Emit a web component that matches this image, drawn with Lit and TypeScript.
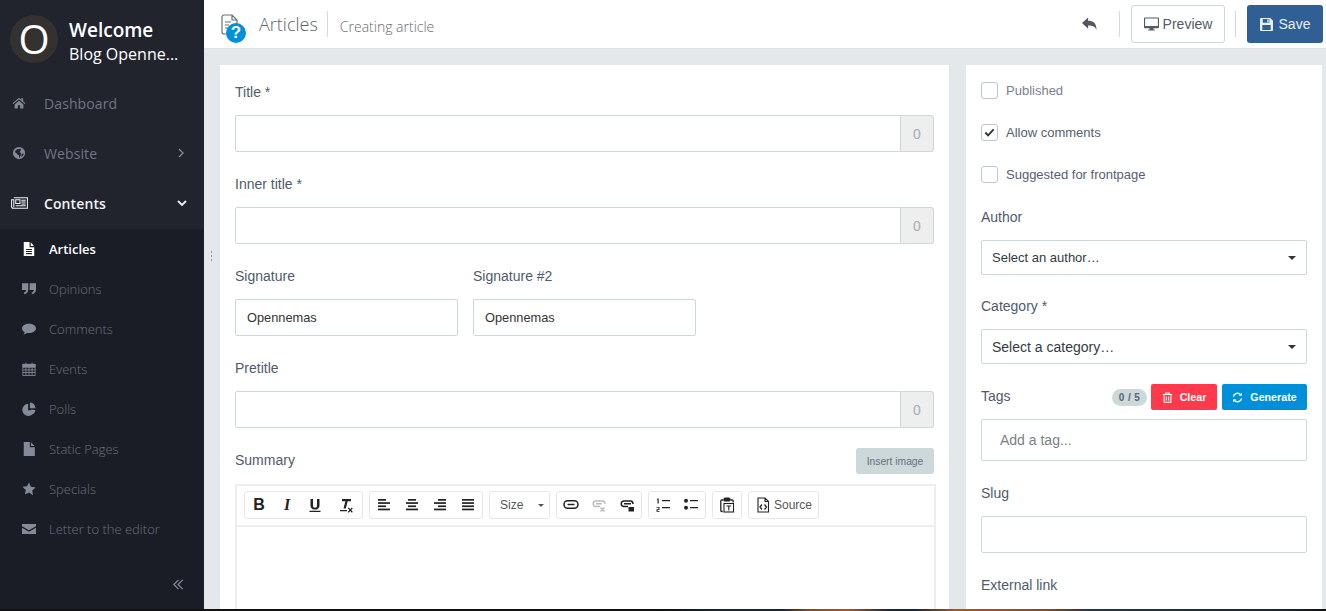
import { LitElement, html, css, svg } from "lit";
import { customElement } from "lit/decorators.js";

const ic = (vb: string, d: string, cls = "") => html`<svg class=${cls} viewBox=${vb} fill="currentColor"><path d=${d}></path></svg>`;

const I = {
  home: ic("0 0 24 24", "M12 3 1 12.500l1.200 1.400L12 5.500l9.800 8.400 1.200-1.400-4-3.400V4h-3v2.500L12 3ZM4.500 14.500V21.500h5.500V16h4v5.500h5.500v-7L12 8l-7.500 6.500Z"),
  globe: ic("0 0 24 24", "M12 1.500a10.500 10.500 0 1 0 0 21 10.500 10.500 0 0 0 0-21Zm-3 3 2 1 3-1 2 2-2 2-1 2 2 1 1 3-2 3-1 3-1-1v-4l-3-1-1-2-3-2 1-3 2-1 2-2Zm8 9 2-1 1 2-2 3-2 1 1-5Z"),
  news: html`<svg viewBox="0 0 18 14" fill="none" stroke="currentColor" stroke-width="1.100"><path d="M3 1.500h14.400v11H2a1.400 1.400 0 0 1-1.400-1.400V3.500h2.400v8"></path><path d="M5 3.600h4.500v4H5zM11 4h4.600M11 6h4.600M11 8h4.600M5 10h10.600"></path></svg>`,
  file: ic("0 0 24 24", "M3 0h10.500v9H22v15H3V0Zm12.500.5L21.500 7h-6V.5Z"),
  fileText: ic("0 0 24 24", "M3 0h10v9h8v15H3V0Zm12 .5L20.500 7H15V.5ZM7 12v1.800h10V12H7Zm0 3.500v1.800h10v-1.800H7Zm0 3.500v1.800h10V19H7Z"),
  quote: ic("0 0 24 24", "M0 2h10.800v10.500c0 5-2.800 8.500-7.300 8.500v-3.500c2.200 0 3.300-1.500 3.300-4H0V2Zm13.200 0H24v10.500c0 5-2.800 8.500-7.300 8.500v-3.500c2.200 0 3.300-1.500 3.300-4h-6.800V2Z"),
  comment: ic("0 0 24 24", "M12 3C5.400 3 0 6.600 0 11c0 2.600 1.800 4.900 4.600 6.400-.300 1.500-1.100 2.800-2.400 3.900 2.400-.200 4.700-1.200 6.300-2.600 1.100.2 2.300.3 3.500.3 6.600 0 12-3.600 12-8s-5.400-8-12-8Z"),
  calendar: html`<svg viewBox="0 0 24 24" fill="none" stroke="currentColor" stroke-width="1.400"><rect x="1.500" y="4" width="21" height="19" fill="none"></rect><path d="M1.500 4h21v5h-21z" fill="currentColor"></path><path d="M1.500 13.500h21M1.500 18h21M6.700 9v14M12 9v14M17.300 9v14M6.700 1v4M17.300 1v4" stroke-width="1.500"></path></svg>`,
  pie: ic("0 0 24 24", "M10.500 3v11h11A10.500 10.500 0 1 1 10.500 3Zm3-2A10.500 10.500 0 0 1 23 10.500l-9.500.200V1Zm1.500 12 8 .5a10 10 0 0 1-3 6.500L15 13Z"),
  star: ic("0 0 24 24", "m12 1 3.400 7.300 7.900 1-5.800 5.400 1.500 7.800L12 18l-7 3.500 1.500-7.800L.7 8.300l7.900-1L12 1Z"),
  mail: ic("0 0 24 24", "M0 3.500h24v3.700L12 14 0 7.200V3.500Zm0 6.500 12 6.800L24 10v10.500H0V10Z"),
};

const navTop = [
  { icon: I.home, label: "Dashboard" },
  { icon: I.globe, label: "Website", chev: "r" },
];
const navSub = [
  { icon: I.fileText, label: "Articles", active: true },
  { icon: I.quote, label: "Opinions" },
  { icon: I.comment, label: "Comments" },
  { icon: I.calendar, label: "Events" },
  { icon: I.pie, label: "Polls" },
  { icon: I.file, label: "Static Pages" },
  { icon: I.star, label: "Specials" },
  { icon: I.mail, label: "Letter to the editor" },
];

@customElement("app-root")
export class AppRoot extends LitElement {
  static styles = css`
    :host { display: block; width: 1326px; height: 611px; overflow: hidden; font-family: "Liberation Sans", Arial, sans-serif; font-size: 14px; color: #4f5b6b; background: #e4e8ea; }
    * { box-sizing: border-box; }
    svg { display: block; }
    .app { display: flex; height: 609px; overflow: hidden; }
    .strip { height: 2px; background: linear-gradient(90deg, #111 0 50%, #1c2530 54%, #1c2530 59%, #8a4a1a 61%, #a8581c 64%, #1c2530 67%, #1c2530 69%, #a8581c 72%, #8a4a1a 79%, #2b3542 82%, #1c2530 97%, #111 100%); }

    .side { width: 204px; flex: none; display: flex; flex-direction: column; background: #1a1d25; font-family: "Open Sans", sans-serif; }
    .sideTop { background: #21242d; height: 229px; flex: none; }
    .brand { display: flex; align-items: center; height: 78px; padding: 0 0 0 10px; gap: 11px; color: #fff; }
    .logo { width: 48px; height: 48px; border-radius: 50%; background: #333230; display: flex; align-items: center; justify-content: center; font-size: 40px; line-height: 1; color: #fff; }
    .who { line-height: 24px; margin-top: 6px; }
    .who b { display: block; font-weight: 600; font-size: 19px; }
    .who span { display: block; font-size: 16px; }
    .item { display: flex; align-items: center; height: 50px; color: #707584; font-size: 14px; letter-spacing: .1px; }
    .item .ico { width: 44px; padding-left: 12px; flex: none; color: #858a98; }
    .item .ico svg { width: 14px; height: 14px; }
    .item.open { color: #f2f2f4; font-weight: 600; }
    .item.open .ico { color: #f2f2f4; padding-left: 11px; }
    .item.open .ico svg { width: 17px; height: 14px; }
    .chev { margin-left: auto; margin-right: 18px; color: #858a98; }
    .chev svg { width: 10px; height: 10px; }
    .open .chev { color: #f2f2f4; margin-right: 17px; }
    .sub { display: flex; flex-direction: column; flex: 1; }
    .subitem { display: flex; align-items: center; height: 40px; color: #6b707d; font-size: 13px; font-weight: 300; }
    .subitem .ico { width: 49px; padding-left: 22px; flex: none; color: #858a98; }
    .subitem .ico svg { width: 14px; height: 14px; }
    .subitem.active { color: #fff; font-weight: 600; }
    .subitem.active .ico { color: #fff; }
    .collapse { margin-top: auto; height: 50px; display: flex; justify-content: flex-end; align-items: center; padding: 0 20px 0 0; color: #858a98; }
    .collapse svg { width: 11px; height: 11px; }

    .main { flex: 1; min-width: 0; display: flex; flex-direction: column; position: relative; }
    .top { height: 49px; flex: none; background: #fff; border-bottom: 1px solid #e0e4e6; display: flex; align-items: center; padding: 0 3px 0 16px; }
    .helpIcon { position: relative; width: 26px; height: 29px; color: #6a6f76; margin-top: 9px; }
    .helpIcon > svg { width: 18px; height: 23px; position: absolute; left: 1px; top: 0; }
    .q { position: absolute; right: 0; bottom: 0; width: 20px; height: 20px; border-radius: 50%; background: #0090da; color: #fff; font-weight: 700; font-size: 17px; line-height: 20px; text-align: center; }
    .crumb { font-family: "Open Sans", sans-serif; font-weight: 300; font-size: 18px; color: #5f646b; margin-left: 13px; }
    .vr { width: 1px; height: 26px; background: #d5d9db; flex: none; }
    .crumbVr { margin: 0 12px 0 9px; }
    .crumb2 { font-family: "Open Sans", sans-serif; font-weight: 300; font-size: 14px; color: #666b72; margin-top: 4px; }
    .actions { margin-left: auto; display: flex; align-items: center; }
    .back { color: #55595f; margin-right: 22px; }
    .back svg { width: 15px; height: 14px; }
    .btnPrev { height: 38px; width: 94px; margin: 0 10px 0 11px; border: 1px solid #ccd8da; border-radius: 3px; background: #fff; display: flex; align-items: center; justify-content: center; gap: 4px; color: #555b62; font-size: 14px; }
    .btnPrev svg { width: 15px; height: 14px; }
    .btnSave { height: 38px; width: 76px; margin-left: 11px; border-radius: 3px; background: #305f96; display: flex; align-items: center; justify-content: center; gap: 6px; color: #e8eef5; font-size: 14px; }
    .btnSave svg { width: 13px; height: 13px; }

    .grippy { position: absolute; left: 7px; top: 251px; display: flex; flex-direction: column; gap: 2px; }
    .grippy i { width: 1px; height: 2px; background: #8d9499; display: block; }
    .body { flex: 1; min-height: 0; display: flex; padding: 16px 4px 0 16px; gap: 17px; overflow: hidden; align-items: flex-start; }
    .card { background: #fff; height: 800px; }
    .left { width: 729px; flex: none; padding: 0 15px; }
    .right { flex: 1; padding: 0 15px; }

    .group { padding-top: 19px; height: 92px; }
    .lbl { line-height: 16px; height: 16px; color: #4f5b6b; font-size: 14px; }
    .ctl { margin-top: 15px; }
    .igroup { display: flex; height: 37px; }
    .input { flex: 1; height: 37px; border: 1px solid #ccd8da; border-radius: 2px 0 0 2px; background: #fff; color: #333; padding: 0 11px; display: flex; align-items: center; font-size: 12.800px; }
    .addon { width: 33px; height: 37px; background: #eeeeee; border: 1px solid #ccd8da; border-left: 0; border-radius: 0 3px 3px 0; color: #a3acb5; display: flex; align-items: center; justify-content: center; font-size: 14px; }
    .cols { display: flex; gap: 15px; }
    .cols > div { width: 223px; }
    .cols .input { flex: none; width: 223px; border-radius: 2px; }

    .sumHead { display: flex; justify-content: space-between; padding-top: 19px; height: 51px; }
    .insert { width: 78px; height: 26px; margin-top: -4px; background: #ccd8da; border-radius: 3px; color: #66707a; font-size: 10.300px; display: flex; align-items: center; justify-content: center; }
    .editor { width: 701px; height: 300px; border: 2px solid #eeeeee; border-bottom: 0; }
    .tb { height: 41px; border-bottom: 2px solid #eeeeee; display: flex; gap: 6px; padding: 5px 0 0 7px; }
    .tg { display: flex; height: 28px; border: 1px solid #e8e8e8; border-radius: 3px; align-items: center; color: #222; }
    .tb button { all: unset; width: 28px; height: 26px; display: flex; align-items: center; justify-content: center; color: #222; }
    .tb button svg { width: 16px; height: 16px; }
    .tb button.wide { width: 33px; }
    .tb .dis { color: #b9b9b9; }
    .size { width: 61px; padding-left: 10px; font-size: 12px; color: #555; display: flex; align-items: center; }
    .size i { margin-left: auto; margin-right: 5px; border: 3px solid transparent; border-top: 3px solid #555; border-bottom: 0; width: 0; height: 0; }
    .src { width: 71px; padding-left: 6px; gap: 3px; font-size: 12px; color: #555; }
    .src svg { width: 16px; height: 16px; color: #222; }
    .tb .bold { font: 700 16px "Liberation Sans", sans-serif; line-height: 1; }
    .tb .ital { font: italic 700 16px "Liberation Serif", serif; line-height: 1; }

    .check { display: flex; align-items: center; gap: 8px; height: 42px; font-size: 13px; color: #55606e; }
    .checks { padding-top: 4px; }
    .box { width: 17px; height: 17px; border: 1px solid #bcc6cc; border-radius: 3px; background: #fff; flex: none; display: flex; align-items: center; justify-content: center; color: #333; }
    .box svg { width: 11px; height: 11px; }
    .muted { color: #78818c; }
    .sel { height: 35px; border: 1px solid #ccd8da; border-radius: 2px; display: flex; align-items: center; padding: 0 10px; color: #333b42; font-size: 13px; margin-top: 15px; }
    .sel.big { font-size: 14px; }
    .sel i { margin-left: auto; border: 4px solid transparent; border-top: 4px solid #333; border-bottom: 0; width: 0; height: 0; }
    .fl { padding-top: 14px; }
    .catg { padding-top: 23px; }
    .tagsHead { display: flex; align-items: center; padding-top: 16px; height: 50px; }
    .tagsHead .lbl { margin-right: auto; margin-top: -2px; }
    .badge { width: 35px; height: 17px; border-radius: 9px; background: #ccd8da; font-weight: 700; font-size: 10px; color: #5a6670; display: flex; align-items: center; justify-content: center; margin-right: 4px; letter-spacing: .4px; }
    .small { height: 26px; border-radius: 2px; color: #fff; font-weight: 700; font-size: 10.700px; display: flex; align-items: center; justify-content: center; gap: 7px; }
    .small svg { width: 11px; height: 11px; }
    .red { width: 66px; background: #ff3a4c; margin-right: 5px; }
    .blue { width: 85px; background: #0090da; }
    .tagbox { height: 42px; border: 1px solid #ccd8da; border-radius: 2px; display: flex; align-items: center; padding: 0 18px; color: #7a7f85; font-size: 14px; margin-top: 5px; }
    .slug { padding-top: 24px; }
    .slug .input { border-radius: 2px; height: 37px; margin-top: 15px; }
    .ext { padding-top: 24px; }
  `;

  private lines(ws: [number, number][]) {
    return html`<svg viewBox="0 0 16 16" fill="currentColor">${ws.map(([x, w], i) => svg`<rect x=${x} y=${2 + i * 3.2} width=${w} height="1.700"></rect>`)}</svg>`;
  }

  private top() {
    return html`
      <div class="top">
        <div class="helpIcon">
          <svg viewBox="0 0 18 23" fill="none" stroke="currentColor" stroke-width="1.200"><path d="M3 1h8l5 5v6M11 1v5h5M3 1a2 2 0 0 0-2 2v15a2 2 0 0 0 2 2h3M4 8h6M4 11h4M4 14h3"></path></svg>
          <div class="q">?</div>
        </div>
        <div class="crumb">Articles</div>
        <div class="vr crumbVr"></div>
        <div class="crumb2">Creating article</div>
        <div class="actions">
          <div class="back"><svg viewBox="0 0 16 14" fill="currentColor"><path d="M6.500 0v3.600C11.500 3.700 15.500 5.500 15.500 13.500c-1.300-4-4-5-9-5V12L0 6l6.500-6Z"></path></svg></div>
          <div class="vr"></div>
          <div class="btnPrev"><svg viewBox="0 0 16 14" fill="currentColor"><path fill-rule="evenodd" d="M1 0h14a1 1 0 0 1 1 1v9.500a1 1 0 0 1-1 1H10v1.300h1.500V14h-7v-1.200H6v-1.300H1a1 1 0 0 1-1-1V1a1 1 0 0 1 1-1Zm.2 1.200v8h13.600v-8H1.200Z"></path></svg>Preview</div>
          <div class="vr"></div>
          <div class="btnSave"><svg viewBox="0 0 14 14" fill="currentColor"><path fill-rule="evenodd" d="M1 0h10l3 3v10a1 1 0 0 1-1 1H1a1 1 0 0 1-1-1V1a1 1 0 0 1 1-1Zm2 1.200V5h7V1.200H3Zm-.5 6.300v5.300h9V7.500h-9Zm5.300-6h1.500v3H7.800v-3Z"></path></svg>Save</div>
        </div>
      </div>`;
  }

  private toolbar() {
    return html`
      <div class="tb">
        <div class="tg">
          <button class="bold">B</button>
          <button class="ital">I</button>
          <button><svg viewBox="0 0 16 16" fill="currentColor"><path d="M3.500 2H6v6.500c0 1.500.8 2.200 2 2.200s2-.7 2-2.200V2h2.500v6.600c0 2.800-1.800 4-4.500 4s-4.500-1.200-4.500-4V2ZM2.500 13.800h11V15h-11z"></path></svg></button>
          <button class="wide"><svg viewBox="0 0 16 16" fill="currentColor"><path d="M4 2h9v2.200h-3.300L7.800 11.500H5.500l1.900-7.300H4ZM2 13h7v1.300H2zM10.800 10.500l1.500 1.700 1.500-1.700 1 .8-1.600 1.800 1.600 1.800-1 .8-1.500-1.700-1.500 1.700-1-.8 1.600-1.800-1.600-1.800z"></path></svg></button>
        </div>
        <div class="tg">
          <button>${this.lines([[2, 8], [2, 12], [2, 8], [2, 12]])}</button>
          <button>${this.lines([[4, 8], [2, 12], [4, 8], [2, 12]])}</button>
          <button>${this.lines([[6, 8], [2, 12], [6, 8], [2, 12]])}</button>
          <button>${this.lines([[2, 12], [2, 12], [2, 12], [2, 12]])}</button>
        </div>
        <div class="tg size">Size<i></i></div>
        <div class="tg">
          <button><svg viewBox="0 0 16 16" fill="none" stroke="currentColor" stroke-width="1.500"><rect x="1" y="3.800" width="14" height="7.400" rx="3.600"></rect><path d="M4.500 7.500h7"></path></svg></button>
          <button class="dis"><svg viewBox="0 0 16 16" fill="none" stroke="currentColor" stroke-width="1.400"><path d="M9 9.500H4.500a2.800 2.800 0 0 1 0-5.500h7a2.800 2.800 0 0 1 2.500 3M5 6.800h6M9.500 10.500l4 4m0-4-4 4"></path></svg></button>
          <button><svg viewBox="0 0 16 16" fill="none" stroke="currentColor" stroke-width="1.500"><path d="M9 9.500H4.500a2.800 2.800 0 0 1 0-5.500h7a2.800 2.800 0 0 1 2.500 3M5 6.800h7"></path><rect x="9.500" y="10" width="5.500" height="4.500" fill="currentColor" stroke="none"></rect></svg></button>
        </div>
        <div class="tg">
          <button><svg viewBox="0 0 16 16" fill="currentColor"><path d="M7 3h8v1.300H7zM7 10h8v1.300H7z"></path><path d="M2.500 1.500h1.200v5H2.500v-4H1.500zM1.500 10h3v3H2.600v1H4.600v.8h-3.100v-2.600h2v-1.400h-2z"></path></svg></button>
          <button><svg viewBox="0 0 16 16" fill="currentColor"><path d="M7 3h8v1.300H7zM7 10h8v1.300H7z"></path><circle cx="3" cy="3.700" r="2"></circle><circle cx="3" cy="10.700" r="2"></circle></svg></button>
        </div>
        <div class="tg">
          <button><svg viewBox="0 0 16 16" fill="none" stroke="currentColor" stroke-width="1.100"><path d="M4.500 3H2.800a1 1 0 0 0-1 1v9.500a1 1 0 0 0 1 1h1M11.500 3h1.700a1 1 0 0 1 1 1v1.500" stroke-width="1.300"></path><rect x="5" y="1" width="6" height="3" rx="1" fill="currentColor"></rect><rect x="5" y="6.500" width="9.500" height="8.500"></rect><path d="M7.500 9h4.500M9.800 9v4.500"></path></svg></button>
        </div>
        <div class="tg src">
          <svg viewBox="0 0 16 16" fill="none" stroke="currentColor" stroke-width="1.100"><path d="M3 1h7l3.500 3.500V15H3zM10 1v3.500h3.500"></path><path d="m7 7.500-2 2.500 2 2.500M9.500 7.500l2 2.500-2 2.500" stroke-width="1.300"></path></svg>
          Source
        </div>
      </div>`;
  }

  render() {
    return html`
      <div class="app">
        <aside class="side">
          <div class="sideTop">
            <div class="brand">
              <div class="logo">O</div>
              <div class="who"><b>Welcome</b><span>Blog Openne...</span></div>
            </div>
            ${navTop.map((n) => html`
              <div class="item">
                <div class="ico">${n.icon}</div>${n.label}
                ${n.chev ? html`<div class="chev"><svg viewBox="0 0 10 10" fill="none" stroke="currentColor" stroke-width="1.300"><path d="m3 1 4 4-4 4"></path></svg></div>` : ""}
              </div>`)}
            <div class="item open">
              <div class="ico">${I.news}</div>Contents
              <div class="chev"><svg viewBox="0 0 10 10" fill="none" stroke="currentColor" stroke-width="1.800"><path d="m1 3 4 4 4-4"></path></svg></div>
            </div>
          </div>
          <div class="sub">
            ${navSub.map((n) => html`
              <div class="subitem ${n.active ? "active" : ""}"><div class="ico">${n.icon}</div>${n.label}</div>`)}
            <div class="collapse"><svg viewBox="0 0 13 13" fill="none" stroke="currentColor" stroke-width="1.500"><path d="M6.500 1 1 6.500 6.500 12M11.500 1 6 6.500l5.500 5.500"></path></svg></div>
          </div>
        </aside>
        <div class="main">
          ${this.top()}
          <div class="grippy"><i></i><i></i><i></i></div>
          <div class="body">
            <section class="card left">
              <div class="group"><div class="lbl">Title *</div><div class="ctl igroup"><div class="input"></div><div class="addon">0</div></div></div>
              <div class="group"><div class="lbl">Inner title *</div><div class="ctl igroup"><div class="input"></div><div class="addon">0</div></div></div>
              <div class="group cols">
                <div><div class="lbl">Signature</div><div class="ctl input">Opennemas</div></div>
                <div><div class="lbl">Signature #2</div><div class="ctl input">Opennemas</div></div>
              </div>
              <div class="group"><div class="lbl">Pretitle</div><div class="ctl igroup"><div class="input"></div><div class="addon">0</div></div></div>
              <div class="sumHead"><div class="lbl">Summary</div><div class="insert">Insert image</div></div>
              <div class="editor">${this.toolbar()}</div>
            </section>
            <section class="card right">
              <div class="checks">
                <div class="check"><div class="box"></div><span class="muted">Published</span></div>
                <div class="check"><div class="box"><svg viewBox="0 0 12 12" fill="none" stroke="currentColor" stroke-width="2"><path d="m1.500 6 3 3.200L10.500 2.500"></path></svg></div><span>Allow comments</span></div>
                <div class="check"><div class="box"></div><span>Suggested for frontpage</span></div>
              </div>
              <div class="fl"><div class="lbl">Author</div><div class="sel">Select an author…<i></i></div></div>
              <div class="catg"><div class="lbl">Category *</div><div class="sel big">Select a category…<i></i></div></div>
              <div class="tagsHead">
                <div class="lbl">Tags</div>
                <div class="badge">0 / 5</div>
                <div class="small red"><svg viewBox="0 0 12 12" fill="none" stroke="currentColor" stroke-width="1.100"><path d="M1 2.800h10M4 2.500V1h4v1.500M2.300 3v8.300h7.400V3M4.700 5v4.500M7.300 5v4.500"></path></svg>Clear</div>
                <div class="small blue"><svg viewBox="0 0 12 12" fill="none" stroke="currentColor" stroke-width="1.500"><path d="M1.500 5a4.600 4.600 0 0 1 8-2M10.500 7a4.600 4.600 0 0 1-8 2"></path><path d="M10.800.8v3.400H7.300zM1.200 11.200V7.800h3.500z" fill="currentColor" stroke="none"></path></svg>Generate</div>
              </div>
              <div class="tagbox">Add a tag...</div>
              <div class="slug"><div class="lbl">Slug</div><div class="input"></div></div>
              <div class="ext"><div class="lbl">External link</div></div>
            </section>
          </div>
        </div>
      </div>
      <div class="strip"></div>`;
  }
}
